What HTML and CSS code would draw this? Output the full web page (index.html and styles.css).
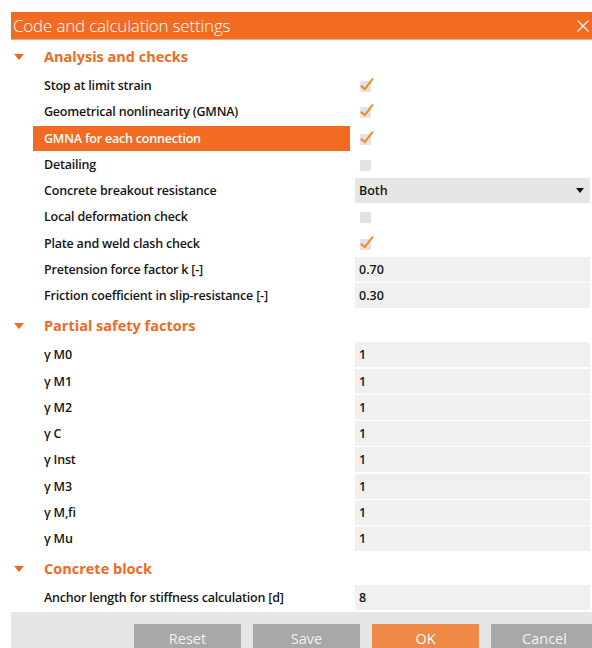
FILE: index.html
```html
<!DOCTYPE html>
<html>
<head>
<meta charset="utf-8">
<link rel="stylesheet" href="styles.css">
</head>
<body>
<div class="dialog">
  <div class="titlebar">
    <span class="title">Code and calculation settings</span>
    <svg class="close" width="12" height="12" viewBox="0 0 12 12"><path d="M0.5 0.5L11.5 11.5M11.5 0.5L0.5 11.5" stroke="#fff" stroke-width="1.1" fill="none"/></svg>
  </div>

  <div class="body">
    <div class="section"><span class="caret"></span><span class="section-name">Analysis and checks</span></div>
    <div class="row"><div class="label">Stop at limit strain</div><div class="value"><span class="check on"></span></div></div>
    <div class="row"><div class="label">Geometrical nonlinearity (GMNA)</div><div class="value"><span class="check on"></span></div></div>
    <div class="row selected"><div class="label">GMNA for each connection</div><div class="value"><span class="check on"></span></div></div>
    <div class="row"><div class="label">Detailing</div><div class="value"><span class="check"></span></div></div>
    <div class="row"><div class="label">Concrete breakout resistance</div><div class="value box select"><span>Both</span><span class="arrow"></span></div></div>
    <div class="row"><div class="label">Local deformation check</div><div class="value"><span class="check"></span></div></div>
    <div class="row"><div class="label">Plate and weld clash check</div><div class="value"><span class="check on"></span></div></div>
    <div class="row"><div class="label">Pretension force factor k [-]</div><div class="value box">0.70</div></div>
    <div class="row"><div class="label">Friction coefficient in slip-resistance [-]</div><div class="value box">0.30</div></div>

    <div class="section"><span class="caret"></span><span class="section-name">Partial safety factors</span></div>
    <div class="row"><div class="label">γ M0</div><div class="value box">1</div></div>
    <div class="row"><div class="label">γ M1</div><div class="value box">1</div></div>
    <div class="row"><div class="label">γ M2</div><div class="value box">1</div></div>
    <div class="row"><div class="label">γ C</div><div class="value box">1</div></div>
    <div class="row"><div class="label">γ Inst</div><div class="value box">1</div></div>
    <div class="row"><div class="label">γ M3</div><div class="value box">1</div></div>
    <div class="row"><div class="label">γ M,fi</div><div class="value box">1</div></div>
    <div class="row"><div class="label">γ Mu</div><div class="value box">1</div></div>

    <div class="section"><span class="caret"></span><span class="section-name">Concrete block</span></div>
    <div class="row"><div class="label">Anchor length for stiffness calculation [d]</div><div class="value box">8</div></div>
  </div>

  <div class="buttons">
    <button class="btn">Reset</button>
    <button class="btn">Save</button>
    <button class="btn primary">OK</button>
    <button class="btn">Cancel</button>
  </div>
</div>
</body>
</html>
```

FILE: styles.css
```css
html, body {
  margin: 0;
  padding: 0;
  background: #fff;
}

body {
  font-family: "Open Sans", "Noto Sans", sans-serif;
  color: #161616;
  width: 592px;
  height: 648px;
  overflow: hidden;
}

.dialog {
  padding-top: 12px;
  margin-left: 11px;
}

.titlebar {
  height: 28px;
  background: #f26b23;
  display: flex;
  align-items: center;
  justify-content: space-between;
  padding: 0 3px 0 2px;
  border-bottom: 1px solid #f5a57a;
  box-sizing: border-box;
}

.title {
  color: #fff;
  font-weight: 300;
  font-size: 17px;
  letter-spacing: -0.2px;
}

.body {
  padding-right: 2px;
}

.section {
  height: 33px;
  display: flex;
  align-items: center;
}

.caret {
  width: 0;
  height: 0;
  border-left: 5px solid transparent;
  border-right: 5px solid transparent;
  border-top: 6px solid #ef6a22;
  margin-left: 3px;
  margin-right: 20px;
}

.section-name {
  color: #ef6a22;
  font-weight: 700;
  font-size: 14.5px;
}

.row {
  height: 26.25px;
  display: flex;
  align-items: stretch;
  margin-left: 22px;
}

.label {
  width: 317px;
  flex: none;
  display: flex;
  align-items: center;
  padding-left: 11px;
  box-sizing: border-box;
  font-size: 12.5px;
  font-weight: 600;
  letter-spacing: -0.2px;
  margin-bottom: 1.25px;
}

.row.selected .label {
  background: #f26b23;
  color: #fff;
}

.value {
  flex: 1;
  margin-left: 5px;
  display: flex;
  align-items: center;
  font-size: 12.5px;
  font-weight: 600;
  margin-bottom: 1.25px;
}

.box {
  background: #f0f0f0;
  padding-left: 4px;
}

.select {
  background: #e6e6e6;
  justify-content: space-between;
  padding-right: 6px;
}

.arrow {
  width: 0;
  height: 0;
  border-left: 4px solid transparent;
  border-right: 4px solid transparent;
  border-top: 5px solid #111;
}

/* checkbox square with an orange tick drawn over it */
.check {
  position: relative;
  width: 11px;
  height: 11px;
  background: #e1e1e6;
  border-radius: 2px;
  margin-left: 5px;
  margin-top: 2px;
}

.check.on::after {
  content: "";
  position: absolute;
  left: 4px;
  top: -5px;
  width: 4px;
  height: 12px;
  border-right: 2.6px solid #f28a1e;
  border-bottom: 2.6px solid #f28a1e;
  transform: rotate(38deg);
}

.buttons {
  background: #e6e6e6;
  height: 40px;
  display: flex;
  align-items: flex-start;
  padding-top: 12px;
  padding-left: 123px;
  gap: 12px;
}

.btn {
  width: 107px;
  flex: none;
  height: 30px;
  border: none;
  background: #a8a8a8;
  color: #f2f2f2;
  font-family: "Open Sans", "Noto Sans", sans-serif;
  font-size: 14.5px;
  padding: 2px 0 0 0;
  display: flex;
  align-items: flex-start;
  justify-content: center;
  line-height: 26px;
}

.btn.primary {
  background: #f08847;
  color: #fff;
}
```
